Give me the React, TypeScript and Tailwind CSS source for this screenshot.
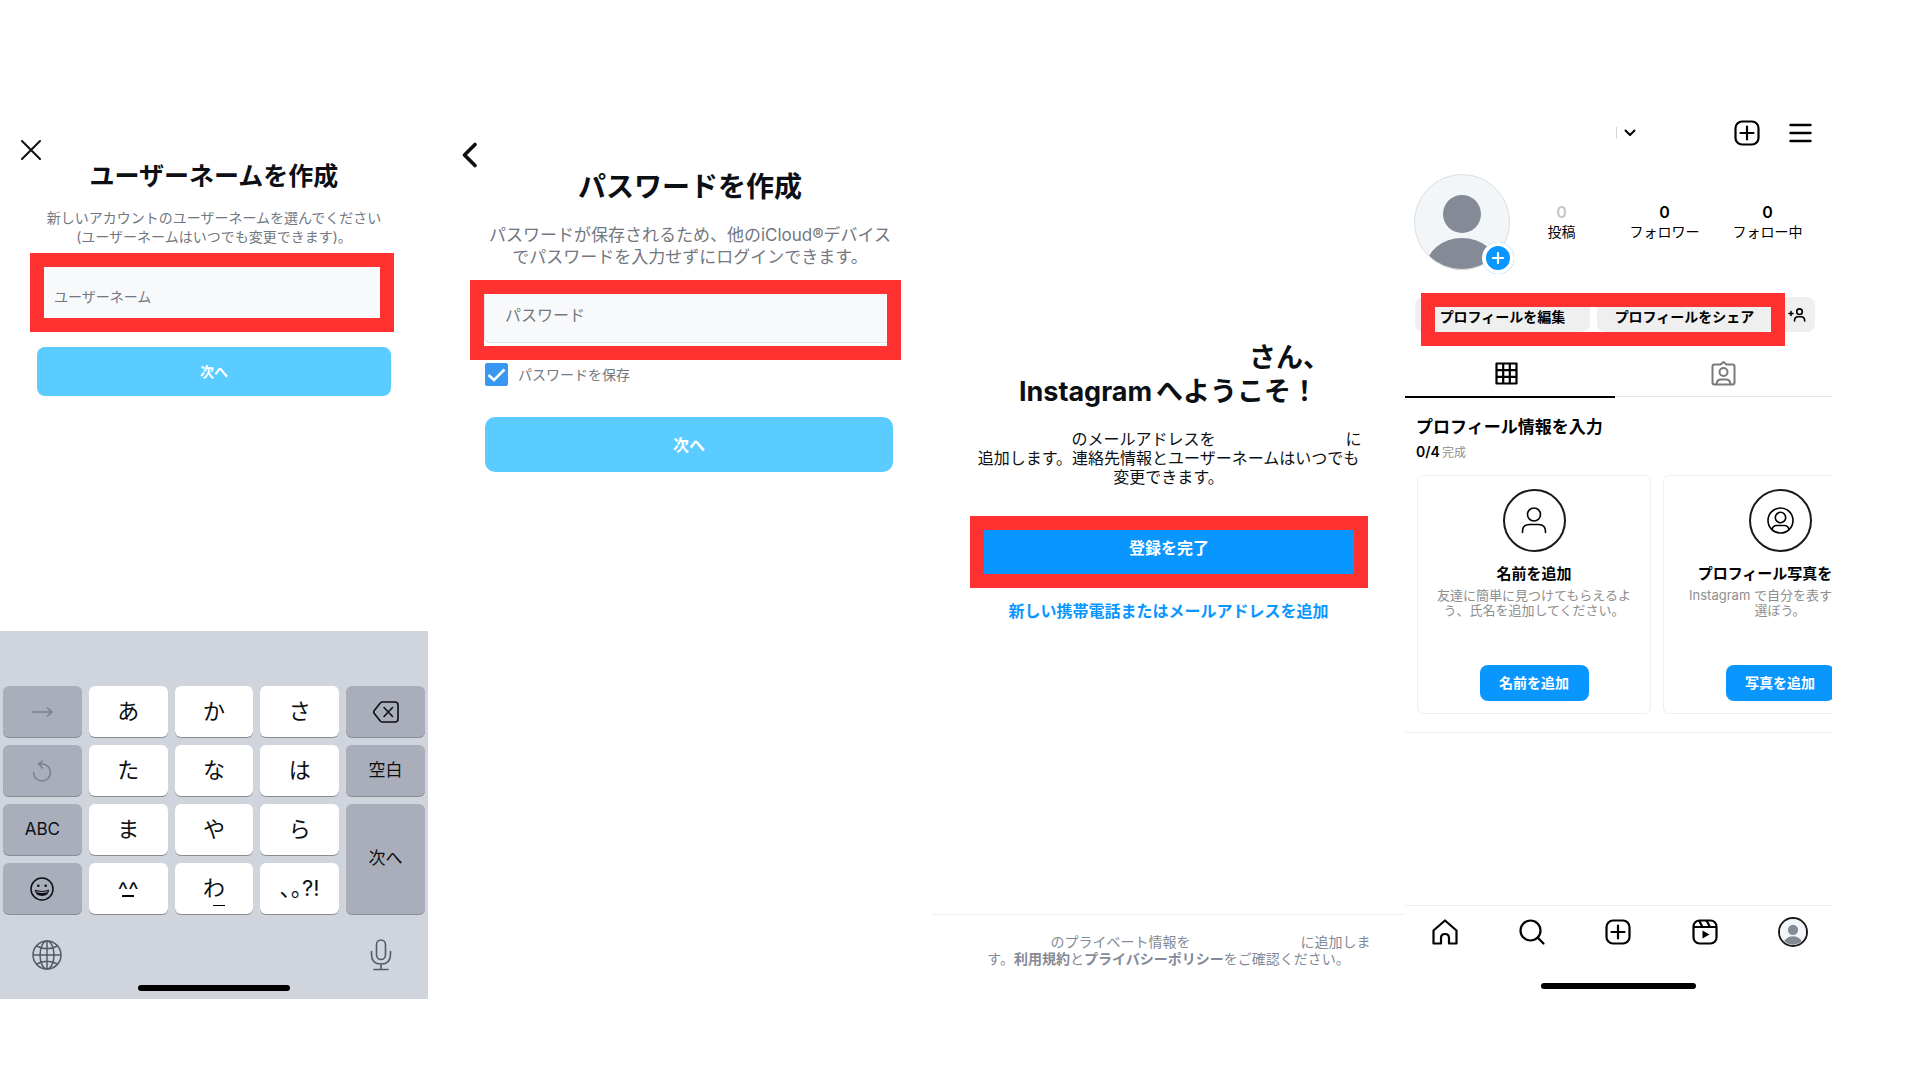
import type { ReactNode } from 'react';

type IconProps = { className?: string };

function CloseIcon() {
  return (
    <svg className="w-5 h-5" viewBox="0 0 20 20" fill="none" stroke="currentColor" strokeWidth={2} strokeLinecap="round">
      <path d="M1 1l18 18M19 1L1 19" />
    </svg>
  );
}

function BackIcon() {
  return (
    <svg className="w-4 h-[26px]" viewBox="0 0 16 26" fill="none" stroke="currentColor" strokeWidth={3.6} strokeLinecap="round" strokeLinejoin="round">
      <path d="M13 2.500L2.500 13l10.500 10.500" />
    </svg>
  );
}

function ArrowIcon() {
  return (
    <svg className="w-[22px] h-[10px]" viewBox="0 0 22 10" fill="none" stroke="#7b808a" strokeWidth={1.5} strokeLinecap="round" strokeLinejoin="round">
      <path d="M1 5h20M16.500 1L21 5l-4.500 4" />
    </svg>
  );
}

function UndoIcon() {
  return (
    <svg className="w-5 h-[22px]" viewBox="0 0 20 22" fill="none" stroke="#7b808a" strokeWidth={1.5} strokeLinecap="round" strokeLinejoin="round">
      <path d="M1.500 12.500A8.500 8.500 0 1 0 10 4H6.500M10.500 1L6.500 4l4 4" />
    </svg>
  );
}

function DeleteIcon() {
  return (
    <svg className="w-[26px] h-[22px]" viewBox="0 0 26 22" fill="none" stroke="currentColor" strokeWidth={1.6} strokeLinecap="round" strokeLinejoin="round">
      <path d="M9.500 1H22q3 0 3 3v14q0 3-3 3H9.500q-1.200 0-2-.8L1.300 12.500q-1.300-1.500 0-3L7.500 1.800q.8-.8 2-.8z" />
      <path d="M11 6.500l8.500 9M19.500 6.500l-8.500 9" />
    </svg>
  );
}

function SmileIcon() {
  return (
    <svg className="w-6 h-6" viewBox="0 0 24 24" fill="none" stroke="currentColor" strokeWidth={1.5}>
      <circle cx="12" cy="12" r="11" />
      <circle cx="8.300" cy="8.800" r="1.300" fill="currentColor" stroke="none" />
      <circle cx="15.700" cy="8.800" r="1.300" fill="currentColor" stroke="none" />
      <path d="M4.800 12.800q7.200 2.200 14.400 0q-.6 6.200-7.200 6.200t-7.200-6.200z" fill="currentColor" stroke="none" />
      <path d="M6.500 14.800q5.500 1.400 11 0" stroke="#a9aeba" strokeWidth={1} />
    </svg>
  );
}

function GlobeIcon() {
  return (
    <svg className="w-[30px] h-[30px]" viewBox="0 0 30 30" fill="none" stroke="#555a63" strokeWidth={1.5}>
      <circle cx="15" cy="15" r="14" />
      <ellipse cx="15" cy="15" rx="7" ry="14" />
      <path d="M15 1v28M1 15h28M4.500 6q10.500 5.500 21 0M4.500 24q10.500-5.500 21 0" />
    </svg>
  );
}

function MicIcon() {
  return (
    <svg className="w-[22px] h-8" viewBox="0 0 22 32" fill="none" stroke="#555a63" strokeWidth={1.6} strokeLinecap="round">
      <rect x="6.500" y="1" width="9" height="19.500" rx="4.500" />
      <path d="M1.500 12.500v3q0 9.500 9.500 9.500t9.500-9.500v-3M11 25v5.500M4 30.500h14" />
    </svg>
  );
}

function PlusSquareIcon() {
  return (
    <svg className="w-[26px] h-[26px]" viewBox="0 0 26 26" fill="none" stroke="currentColor" strokeWidth={2.2} strokeLinecap="round">
      <rect x="1.500" y="1.500" width="23" height="23" rx="6.500" />
      <path d="M13 6.500v13M6.500 13h13" />
    </svg>
  );
}

function MenuIcon() {
  return (
    <svg className="w-[23px] h-5" viewBox="0 0 23 20" fill="none" stroke="currentColor" strokeWidth={2.4} strokeLinecap="round">
      <path d="M1.500 2h20M1.500 10h20M1.500 18h20" />
    </svg>
  );
}

function AddPersonIcon() {
  return (
    <svg className="w-[18px] h-[14px]" viewBox="0 0 18 14" fill="none" stroke="currentColor" strokeWidth={1.6} strokeLinecap="round">
      <path d="M3 3.500v4M1 5.500h4" />
      <circle cx="11.500" cy="3.700" r="2.800" />
      <path d="M6.500 13q0-4.300 3.500-4.300h3q3.700 0 3.700 4.300" />
    </svg>
  );
}

function GridIcon() {
  return (
    <svg className="w-[23px] h-[23px]" viewBox="0 0 23 23" fill="none" stroke="currentColor" strokeWidth={2.2} strokeLinejoin="round">
      <path d="M1.500 1.500h20v20h-20zM8.200 1.500v20M14.800 1.500v20M1.500 8.200h20M1.500 14.800h20" />
    </svg>
  );
}

function TaggedIcon() {
  return (
    <svg className="w-[25px] h-[25px]" viewBox="0 0 25 25" fill="none" stroke="#7a7a7a" strokeWidth={2} strokeLinejoin="round">
      <path d="M3.500 3.500h6L12.500 1l3 2.500h6q2 0 2 2v16q0 2-2 2h-18q-2 0-2-2v-16q0-2 2-2z" />
      <circle cx="12.500" cy="11" r="4" />
      <path d="M5.500 23q.5-4.500 4.500-4.500h5q4 0 4.500 4.500" />
    </svg>
  );
}

function PersonIcon() {
  return (
    <svg className="w-[26px] h-[27px]" viewBox="0 0 26 27" fill="none" stroke="currentColor" strokeWidth={1.6} strokeLinecap="round">
      <circle cx="13" cy="7.500" r="6.500" />
      <path d="M1.500 25.500v-1q0-7 7-7h9q7 0 7 7v1" />
    </svg>
  );
}

function PersonCircleIcon() {
  return (
    <svg className="w-[27px] h-[27px]" viewBox="0 0 27 27" fill="none" stroke="currentColor" strokeWidth={1.6}>
      <circle cx="13.500" cy="13.500" r="12.500" />
      <circle cx="13.500" cy="10.500" r="5.200" />
      <path d="M5 22.500q1-4 4.500-4h8q3.500 0 4.500 4" />
    </svg>
  );
}

function HomeIcon() {
  return (
    <svg className="w-[26px] h-[26px]" viewBox="0 0 26 26" fill="none" stroke="currentColor" strokeWidth={2.2} strokeLinejoin="round">
      <path d="M1.500 11.500L13 1.500l11.500 10v13h-7.500V19q0-4-4-4t-4 4v5.500H1.500z" />
    </svg>
  );
}

function SearchIcon() {
  return (
    <svg className="w-[26px] h-[26px]" viewBox="0 0 26 26" fill="none" stroke="currentColor" strokeWidth={2.2} strokeLinecap="round">
      <circle cx="11.500" cy="11.500" r="10" />
      <path d="M18.800 18.800l5.700 5.700" />
    </svg>
  );
}

function ReelsIcon() {
  return (
    <svg className="w-[26px] h-[26px]" viewBox="0 0 26 26" fill="none" stroke="currentColor" strokeWidth={2.2} strokeLinejoin="round">
      <rect x="1.500" y="1.500" width="23" height="23" rx="6" />
      <path d="M1.500 8h23M7 1.500L10.500 8M14.500 1.500L18 8" />
      <path d="M10.500 11.500v8l7-4z" fill="currentColor" stroke="none" />
    </svg>
  );
}

function AvatarIcon({ className }: IconProps) {
  return (
    <svg className={className} viewBox="0 0 96 96">
      <defs>
        <clipPath id="avatar">
          <circle cx="48" cy="48" r="47.500" />
        </clipPath>
      </defs>
      <circle cx="48" cy="48" r="47.500" fill="#f3f6f8" />
      <g clipPath="url(#avatar)" fill="#848a96">
        <circle cx="48" cy="40" r="19" />
        <ellipse cx="48" cy="94" rx="36" ry="30" />
      </g>
      <circle cx="48" cy="48" r="47.500" fill="none" stroke="#dcdee0" />
    </svg>
  );
}

const rows: { left: ReactNode; label: string; kana: ReactNode[] }[] = [
  { left: <ArrowIcon />, label: '次の候補', kana: ['あ', 'か', 'さ'] },
  { left: <UndoIcon />, label: '元に戻す', kana: ['た', 'な', 'は'] },
  { left: 'ABC', label: 'ABC', kana: ['ま', 'や', 'ら'] },
  {
    left: <SmileIcon />,
    label: '絵文字',
    kana: [
      <span className="flex flex-col items-center leading-[10px]"><span className="pt-1">^^</span><span className="w-3 border-b-2 border-black" /></span>,
      <span className="flex flex-col items-end">わ<span className="w-3 border-b border-black" /></span>,
      '､｡?!',
    ],
  },
];

const darkKey = 'flex items-center justify-center rounded-md bg-[#a9aeba] text-[17px] shadow-[0_1px_0_#898c92]';
const lightKey = 'flex items-center justify-center rounded-md bg-white text-[22px] shadow-[0_1px_0_#898c92]';

function Keyboard() {
  return (
    <div className="mt-auto bg-[#d0d4dc] pt-[55px] pb-2">
      <div className="grid grid-cols-5 grid-rows-[repeat(4,51px)] gap-x-[7px] gap-y-2 px-[3px]">
        {rows.map((row, i) => (
          <div key={row.label} className="contents">
            <button aria-label={row.label} className={darkKey}>{row.left}</button>
            {row.kana.map((kana, j) => (
              <button key={j} className={lightKey}>{kana}</button>
            ))}
            {i === 0 && <button aria-label="削除" className={darkKey}><DeleteIcon /></button>}
            {i === 1 && <button className={darkKey}>空白</button>}
            {i === 2 && <button className={`${darkKey} row-span-2`}>次へ</button>}
          </div>
        ))}
      </div>
      <div className="flex justify-between px-8 pt-[25px]">
        <button aria-label="言語"><GlobeIcon /></button>
        <button aria-label="音声入力" className="pr-1"><MicIcon /></button>
      </div>
      <div className="mx-auto mt-[14px] h-[6px] w-[152px] rounded-full bg-black" />
    </div>
  );
}

function UsernameScreen() {
  return (
    <section className="flex flex-col text-[#0c1014]">
      <button aria-label="閉じる" className="mt-5 ml-[21px] self-start"><CloseIcon /></button>
      <h1 className="text-center text-[25px] leading-8 font-bold">ユーザーネームを作成</h1>
      <p className="mt-4 text-center text-sm leading-[19px] text-[#737780]">
        新しいアカウントのユーザーネームを選んでください
        <br />
        (ユーザーネームはいつでも変更できます)。
      </p>
      <div className="mt-[7px] mr-[34px] ml-[30px] border-[14px] border-[#ff3131]">
        <input
          type="text"
          aria-label="ユーザーネーム"
          placeholder="ユーザーネーム"
          className="block h-[51px] w-full bg-[#f7f9fa] px-[10px] pt-2 text-sm outline-none placeholder:text-[#737780]"
        />
      </div>
      <button className="mx-[37px] mt-[15px] h-[49px] rounded-lg bg-[#5accff] text-sm font-bold text-white">次へ</button>
      <Keyboard />
    </section>
  );
}

function PasswordScreen() {
  return (
    <section className="flex flex-col pl-5 text-[#0c1014]">
      <button aria-label="戻る" className="mt-[22px] ml-[14px] self-start"><BackIcon /></button>
      <h1 className="text-center text-[28px] leading-[38px] font-bold">パスワードを作成</h1>
      <p className="mt-[18px] text-center text-[17px] leading-[22px] text-[#737780]">
        パスワードが保存されるため、他のiCloud®デバイス
        <br />
        でパスワードを入力せずにログインできます。
      </p>
      <div className="mt-3 mr-[31px] ml-[22px] border-[14px] border-[#ff3131] pb-[3px]">
        <input
          type="password"
          aria-label="パスワード"
          placeholder="パスワード"
          className="block h-[49px] w-full rounded-bl-md border-b border-l border-[#dfe4e8] bg-[#f8f9fa] px-5 pb-[6px] text-base outline-none placeholder:text-[#737780]"
        />
      </div>
      <label className="mt-[3px] ml-[37px] flex items-center gap-[10px] text-sm text-[#737780]">
        <span className="relative flex">
          <input type="checkbox" defaultChecked className="peer h-[23px] w-[23px] appearance-none rounded-xs border border-[#3897f0] checked:bg-[#3897f0]" />
          <svg className="pointer-events-none absolute inset-0 hidden peer-checked:block" viewBox="0 0 23 23" fill="none" stroke="white" strokeWidth={2.5}>
            <path d="M3.500 12l5.500 5L19.500 6.500" />
          </svg>
        </span>
        パスワードを保存
      </label>
      <button className="mt-[31px] mr-[39px] ml-[37px] h-[55px] rounded-[10px] bg-[#5accff] text-base font-bold text-white">次へ</button>
    </section>
  );
}

function WelcomeScreen() {
  return (
    <section className="flex flex-col text-center text-[#0c1014]">
      <h1 className="mt-[221px] text-[27px] leading-[34px] font-bold">
        <span className="inline-block w-[242px]" />さん、
        <br />
        <span className="mr-1">Instagram</span>へようこそ！
      </h1>
      <p className="mt-[21px] text-base leading-[19px]">
        <span className="inline-block w-24" />のメールアドレスを<span className="inline-block w-[130px]" />に
        <br />
        追加します。連絡先情報とユーザーネームはいつでも
        <br />
        変更できます。
      </p>
      <div className="mt-[29px] mr-[37px] ml-[38px] flex border-[14px] border-[#ff3131]">
        <button className="h-11 flex-1 bg-[#0996ff] pb-2 text-base font-bold text-white">登録を完了</button>
      </div>
      <a href="#add" className="mt-[11px] text-base font-bold text-[#0996ff]">新しい携帯電話またはメールアドレスを追加</a>
      <footer className="mt-auto border-t border-[#f0f1f2] pt-[18px] pb-8 text-sm leading-[17px] text-[#848a96]">
        <span className="inline-block w-[84px]" />のプライベート情報を<span className="inline-block w-[110px]" />に追加しま
        <br />
        す。<a href="#terms" className="font-bold">利用規約</a>と<a href="#privacy" className="font-bold">プライバシーポリシー</a>をご確認ください。
      </footer>
    </section>
  );
}

const stats = [
  { label: '投稿', color: 'text-[#c7c7c7]' },
  { label: 'フォロワー', color: 'text-black' },
  { label: 'フォロー中', color: 'text-black' },
];

const cards = [
  { icon: <PersonIcon />, title: '名前を追加', lines: ['友達に簡単に見つけてもらえるよ', 'う、氏名を追加してください。'], action: '名前を追加' },
  { icon: <PersonCircleIcon />, title: 'プロフィール写真を追加', lines: ['Instagram で自分を表す写真を', '選ぼう。'], action: '写真を追加' },
];

function ProfileScreen() {
  return (
    <section className="flex min-w-0 flex-col overflow-hidden text-black">
      <header className="flex h-[26px] items-center justify-end pr-5">
        <button aria-label="アカウントを切り替え" className="mr-[98px] flex items-center gap-[7px]">
          <span className="h-3 border-l border-gray-300" />
          <svg className="h-2 w-3" viewBox="0 0 12 8" fill="none" stroke="currentColor" strokeWidth={2} strokeLinecap="round" strokeLinejoin="round">
            <path d="M1.500 1.500L6 6l4.500-4.500" />
          </svg>
        </button>
        <button aria-label="作成" className="mr-[29px]"><PlusSquareIcon /></button>
        <button aria-label="メニュー"><MenuIcon /></button>
      </header>

      <div className="mt-7 flex items-center pr-[13px] pl-[9px]">
        <div className="relative">
          <AvatarIcon className="h-24 w-24" />
          <button aria-label="写真を追加" className="absolute -right-1 -bottom-1 rounded-full bg-[#0996ff] ring-4 ring-white ring-inset">
            <svg className="h-8 w-8" viewBox="0 0 32 32" fill="none" stroke="white" strokeWidth={2.2} strokeLinecap="round">
              <path d="M16 11v10M11 16h10" />
            </svg>
          </button>
        </div>
        <dl className="grid flex-1 grid-cols-3 text-center text-sm leading-5">
          {stats.map((stat) => (
            <div key={stat.label} className="flex flex-col-reverse">
              <dt>{stat.label}</dt>
              <dd className={`text-base leading-5 font-semibold ${stat.color}`}>0</dd>
            </div>
          ))}
        </dl>
      </div>

      <div className="relative mt-[27px] flex h-[35px] gap-[7px] pr-[17px] pl-[10px] text-sm font-bold">
        <button className="flex-1 rounded-lg bg-[#efefef] pt-1">プロフィールを編集</button>
        <button className="flex-1 rounded-lg bg-[#efefef] pt-1">プロフィールをシェア</button>
        <button aria-label="友達を追加" className="flex w-9 items-center justify-center rounded-lg bg-[#efefef]"><AddPersonIcon /></button>
        <div className="pointer-events-none absolute -top-1 right-[47px] left-[16px] h-[53px] border-[14px] border-[#ff3131]" />
      </div>

      <div className="mt-[22px] grid grid-cols-[210fr_217fr]">
        <button aria-label="投稿一覧" className="flex h-11 items-center justify-center border-b-2 border-black pr-2 pb-1"><GridIcon /></button>
        <button aria-label="タグ付け" className="flex h-[43px] items-center justify-center border-b border-[#e6e6e6] pb-1"><TaggedIcon /></button>
      </div>

      <h2 className="mt-[17px] pl-[11px] text-[17px] leading-6 font-bold">プロフィール情報を入力</h2>
      <p className="mt-1 pl-[11px] text-xs leading-[18px] text-[#8e8e8e]">
        <span className="mr-0.5 text-sm leading-[18px] font-semibold text-black">0/4</span>完成
      </p>
      <div className="mt-[13px] flex gap-3 pl-3">
        {cards.map((card) => (
          <div key={card.title} className="flex h-[239px] w-[234px] shrink-0 flex-col items-center rounded-md border border-[#efefef] pt-[13px] pb-3 text-center">
            <div className="flex h-[63px] w-[63px] items-center justify-center rounded-full border-2 border-[#1a1a1a]">{card.icon}</div>
            <h3 className="mt-3 text-[15px] leading-5 font-bold">{card.title}</h3>
            <p className="mt-1 text-[13px] leading-[15px] text-[#8e8e8e]">
              {card.lines[0]}
              <br />
              {card.lines[1]}
            </p>
            <button className="mt-auto h-9 w-[109px] rounded-lg bg-[#0996ff] text-sm font-bold text-white">{card.action}</button>
          </div>
        ))}
      </div>
      <hr className="mt-[18px] border-[#efefef]" />

      <nav className="mt-auto border-t border-[#efefef] pt-[11px] pb-[10px]">
        <div className="flex h-[30px] items-center justify-between pr-6 pl-[27px]">
          <button aria-label="ホーム"><HomeIcon /></button>
          <button aria-label="検索"><SearchIcon /></button>
          <button aria-label="作成"><PlusSquareIcon /></button>
          <button aria-label="リール"><ReelsIcon /></button>
          <button aria-label="プロフィール" className="rounded-full border-2 border-[#1a1a1a]"><AvatarIcon className="h-[26px] w-[26px]" /></button>
        </div>
        <div className="mx-auto mt-9 h-[6px] w-[155px] rounded-full bg-black" />
      </nav>
    </section>
  );
}

function App() {
  return (
    <main className="grid min-h-screen grid-cols-[428fr_504fr_473fr_427fr_88fr] bg-white pt-[120px] pb-[81px] font-['Inter','Noto_Sans_CJK_JP',sans-serif]">
      <UsernameScreen />
      <PasswordScreen />
      <WelcomeScreen />
      <ProfileScreen />
    </main>
  );
}

export default App;
